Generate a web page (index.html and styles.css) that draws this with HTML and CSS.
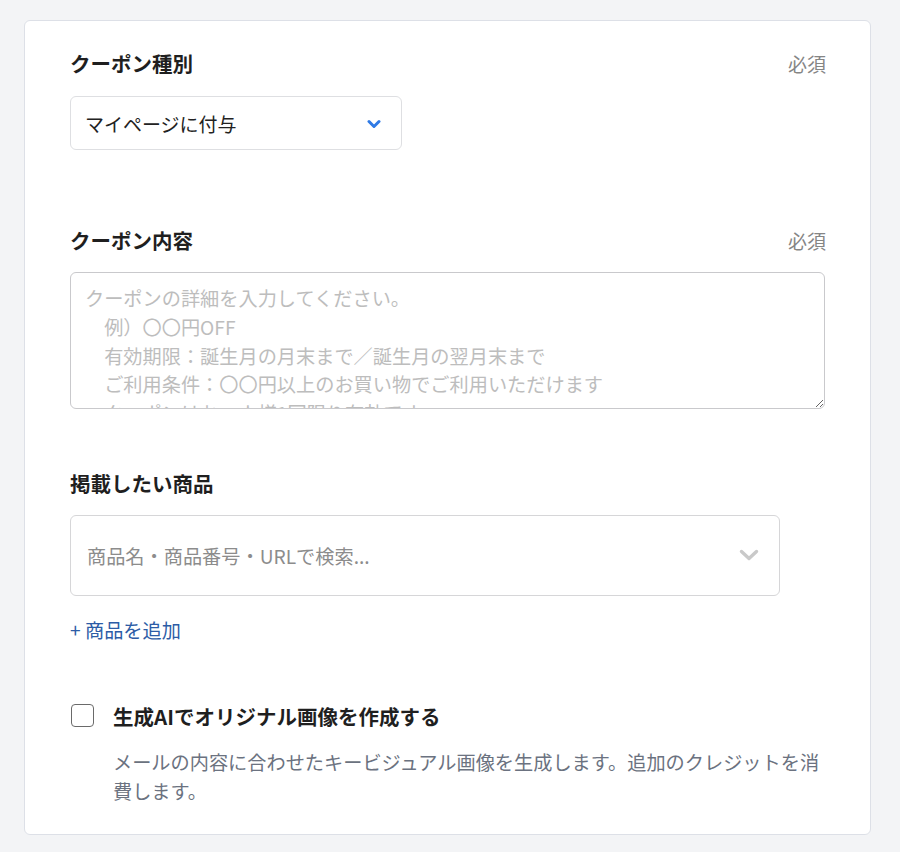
FILE: index.html
```html
<!DOCTYPE html>
<html lang="ja">
<head>
<meta charset="utf-8">
<title>クーポン設定</title>
<link rel="stylesheet" href="styles.css">
</head>
<body>
<div class="card">
  <section class="field field-type">
    <div class="field-head">
      <span class="label">クーポン種別</span>
      <span class="required">必須</span>
    </div>
    <div class="select">
      <span class="select-text">マイページに付与</span>
      <svg class="chev-blue" width="14" height="10" viewBox="0 0 14 10"><path d="M2 2.5 L7 7.5 L12 2.5" fill="none" stroke="#2f7ae5" stroke-width="3" stroke-linecap="round" stroke-linejoin="round"/></svg>
    </div>
  </section>

  <section class="field field-content">
    <div class="field-head">
      <span class="label">クーポン内容</span>
      <span class="required">必須</span>
    </div>
    <textarea class="textarea" placeholder="クーポンの詳細を入力してください。&#10;　例）〇〇円OFF&#10;　有効期限：誕生月の月末まで／誕生月の翌月末まで&#10;　ご利用条件：〇〇円以上のお買い物でご利用いただけます&#10;　クーポンはお一人様1回限り有効です"></textarea>
  </section>

  <section class="field field-products">
    <div class="field-head">
      <span class="label">掲載したい商品</span>
    </div>
    <div class="search">
      <span class="search-text">商品名・商品番号・URLで検索...</span>
      <svg class="chev-gray" width="20" height="13" viewBox="0 0 20 13"><path d="M2.5 2.5 L10 9.5 L17.5 2.5" fill="none" stroke="#c9c9c9" stroke-width="3.4" stroke-linecap="round" stroke-linejoin="round"/></svg>
    </div>
    <a class="add-link" href="#">+ 商品を追加</a>
  </section>

  <section class="ai">
    <label class="ai-row">
      <span class="checkbox"></span>
      <span class="label">生成AIでオリジナル画像を作成する</span>
    </label>
    <p class="ai-desc">メールの内容に合わせたキービジュアル画像を生成します。追加のクレジットを消費します。</p>
  </section>
</div>
</body>
</html>
```
FILE: styles.css
```css
* { box-sizing: border-box; }
html, body { margin: 0; padding: 0; }
body {
  background: #f3f4f6;
  padding: 20px 0 0 24px;
  font-family: "Noto Sans CJK JP", "Noto Sans", sans-serif;
  color: #1f1f1f;
}
.card {
  width: 847px;
  background: #ffffff;
  border: 1px solid #dde0e7;
  border-radius: 6px;
  padding: 27px 45px 28px 45px;
}
.field-head {
  display: flex;
  justify-content: space-between;
  align-items: center;
  height: 31px;
}
.label {
  font-size: 20.5px;
  font-weight: 700;
  line-height: 31px;
  color: #1f1f1f;
}
.required {
  font-size: 19px;
  color: #858585;
  line-height: 31px;
  margin-right: -1px;
}
.select {
  margin-top: 17px;
  width: 332px;
  height: 54px;
  border: 1px solid #dedfe2;
  border-radius: 6px;
  display: flex;
  align-items: center;
  justify-content: space-between;
  padding: 0 20px 0 14px;
}
.select-text {
  font-size: 19px;
  color: #222;
}
.chev-blue { display: block; margin-top: 1px; }
.field-content { margin-top: 75px; }
.textarea {
  display: block;
  margin-top: 16px;
  width: 755px;
  height: 137px;
  border: 1px solid #c9c9cc;
  border-radius: 6px;
  padding: 11px 14px;
  font-family: "Noto Sans CJK JP", "Noto Sans", sans-serif;
  font-size: 19.2px;
  line-height: 28.8px;
  color: #222;
  resize: vertical;
  overflow: hidden;
  background: #fff;
}
.textarea::placeholder { color: #bdbdbd; opacity: 1; }
.field-products { margin-top: 59px; }
.search {
  margin-top: 16px;
  width: 710px;
  height: 81px;
  border: 1px solid #d6d6d8;
  border-radius: 6px;
  display: flex;
  align-items: center;
  justify-content: space-between;
  padding: 0 20px 0 16px;
}
.search-text {
  font-size: 19.2px;
  color: #8c8c8c;
}
.chev-gray { display: block; }
.add-link {
  display: inline-block;
  margin-top: 20px;
  font-size: 19.2px;
  line-height: 28.8px;
  color: #2c5ca6;
  text-decoration: none;
}
.ai { margin-top: 56px; }
.ai-row {
  display: flex;
  align-items: center;
  gap: 19px;
}
.checkbox {
  display: block;
  width: 23px;
  height: 23px;
  border: 1.5px solid #6a6a6a;
  border-radius: 4px;
  margin-left: 1px;
  margin-top: -2px;
}
.ai-desc {
  margin: 16px 0 0 43px;
  font-size: 19.2px;
  line-height: 29px;
  color: #6b7280;
}
```
